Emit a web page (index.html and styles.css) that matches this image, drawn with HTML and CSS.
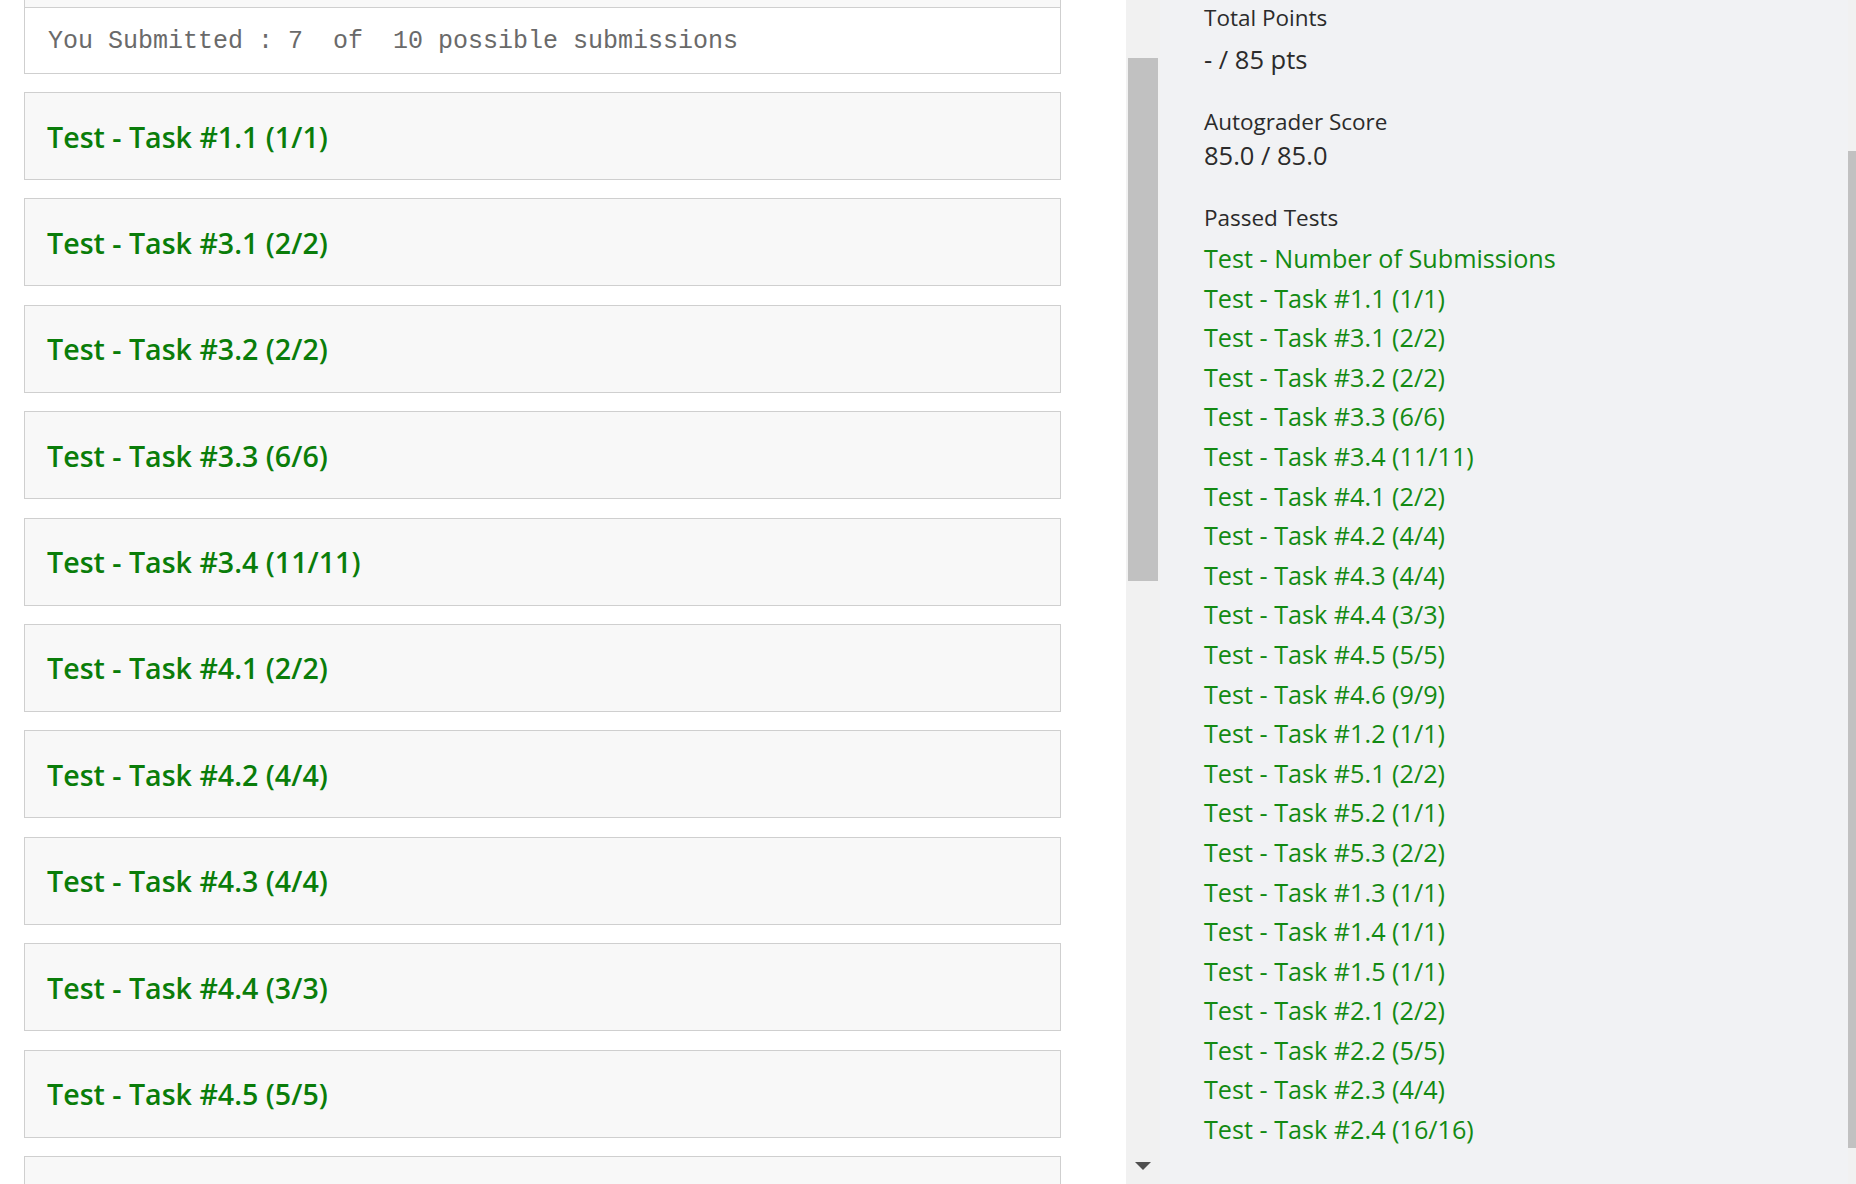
FILE: index.html
```html
<!DOCTYPE html>
<html lang="en">
<head>
    <meta charset="UTF-8">
    <title>Autograder Results</title>
    <link rel="stylesheet" href="styles.css">
</head>
<body>

    <!-- Test output column -->
    <div class="results">
        <div class="card card-clipped"></div>

        <div class="submit-box">You Submitted : 7  of  10 possible submissions</div>

        <div class="card"><h3>Test - Task #1.1 (1/1)</h3></div>
        <div class="card"><h3>Test - Task #3.1 (2/2)</h3></div>
        <div class="card"><h3>Test - Task #3.2 (2/2)</h3></div>
        <div class="card"><h3>Test - Task #3.3 (6/6)</h3></div>
        <div class="card"><h3>Test - Task #3.4 (11/11)</h3></div>
        <div class="card"><h3>Test - Task #4.1 (2/2)</h3></div>
        <div class="card"><h3>Test - Task #4.2 (4/4)</h3></div>
        <div class="card"><h3>Test - Task #4.3 (4/4)</h3></div>
        <div class="card"><h3>Test - Task #4.4 (3/3)</h3></div>
        <div class="card"><h3>Test - Task #4.5 (5/5)</h3></div>
        <div class="card card-empty"></div>
    </div>

    <!-- Scrollbar of the results column -->
    <div class="scroll-track">
        <div class="scroll-thumb"></div>
        <div class="scroll-arrow"></div>
    </div>

    <!-- Score sidebar -->
    <div class="sidebar">
        <div class="label label-first">Total Points</div>
        <div class="value value-points">- / 85 pts</div>

        <div class="label label-gap">Autograder Score</div>
        <div class="value">85.0 / 85.0</div>

        <div class="label label-gap">Passed Tests</div>
        <ul class="passed">
            <li>Test - Number of Submissions</li>
            <li>Test - Task #1.1 (1/1)</li>
            <li>Test - Task #3.1 (2/2)</li>
            <li>Test - Task #3.2 (2/2)</li>
            <li>Test - Task #3.3 (6/6)</li>
            <li>Test - Task #3.4 (11/11)</li>
            <li>Test - Task #4.1 (2/2)</li>
            <li>Test - Task #4.2 (4/4)</li>
            <li>Test - Task #4.3 (4/4)</li>
            <li>Test - Task #4.4 (3/3)</li>
            <li>Test - Task #4.5 (5/5)</li>
            <li>Test - Task #4.6 (9/9)</li>
            <li>Test - Task #1.2 (1/1)</li>
            <li>Test - Task #5.1 (2/2)</li>
            <li>Test - Task #5.2 (1/1)</li>
            <li>Test - Task #5.3 (2/2)</li>
            <li>Test - Task #1.3 (1/1)</li>
            <li>Test - Task #1.4 (1/1)</li>
            <li>Test - Task #1.5 (1/1)</li>
            <li>Test - Task #2.1 (2/2)</li>
            <li>Test - Task #2.2 (5/5)</li>
            <li>Test - Task #2.3 (4/4)</li>
            <li>Test - Task #2.4 (16/16)</li>
        </ul>
    </div>

    <!-- Page scrollbar -->
    <div class="page-track">
        <div class="page-thumb"></div>
    </div>

</body>
</html>
```

FILE: styles.css
```css
body {
    margin: 0;
    padding: 0;
    display: flex;
    height: 100vh;
    overflow: hidden;
    background-color: #fff;
    font-family: 'Open Sans', 'Noto Sans', sans-serif;
}

/* Results column */
.results {
    width: 1126px;
    flex-shrink: 0;
    padding-left: 24px;
    box-sizing: border-box;
    overflow: hidden;
}

.card {
    width: 1037px;
    height: 88px;
    box-sizing: border-box;
    background-color: #f8f8f8;
    border: 1px solid #cfcfcf;
    padding-left: 22px;
    display: flex;
    align-items: center;
    margin-bottom: 18.4px;
}

.card-clipped {
    height: 8px;
    border-top: none;
    margin-bottom: 0;
}

.card h3 {
    margin: 0;
    font-size: 28.6px;
    font-weight: 600;
    color: #0a7d0a;
}

.submit-box {
    width: 1037px;
    height: 66px;
    box-sizing: border-box;
    border: 1px solid #cfcfcf;
    border-top: none;
    padding: 2px 0 0 23px;
    display: flex;
    align-items: center;
    font-family: 'Liberation Mono', monospace;
    font-size: 25px;
    color: #6a6a6a;
    white-space: pre;
    margin-bottom: 18px;
}

/* Left scrollbar */
.scroll-track {
    width: 34px;
    flex-shrink: 0;
    background-color: #f1f1f1;
    display: flex;
    flex-direction: column;
    align-items: center;
}

.scroll-thumb {
    width: 30px;
    height: 523px;
    margin-top: 58px;
    background-color: #c1c1c1;
}

.scroll-arrow {
    margin-top: auto;
    margin-bottom: 14px;
    width: 0;
    height: 0;
    border-left: 8px solid transparent;
    border-right: 8px solid transparent;
    border-top: 8px solid #505050;
}

/* Score sidebar */
.sidebar {
    flex-grow: 1;
    background-color: #f1f2f4;
    padding-left: 44px;
    color: #2b2b2b;
}

.label {
    font-size: 22.5px;
    line-height: 30px;
    font-weight: 500;
}

.label-first {
    margin-top: 3px;
}

.label-gap {
    margin-top: 31px;
}

.value {
    font-size: 25.5px;
    line-height: 34px;
    font-weight: 500;
    margin-top: 1px;
}

.value-points {
    margin-top: 9px;
}

.passed {
    list-style: none;
    margin: 6px 0 0 0;
    padding: 0;
}

.passed li {
    font-size: 25.2px;
    line-height: 39.6px;
    color: #138a13;
}

/* Page scrollbar */
.page-track {
    width: 8px;
    flex-shrink: 0;
    background-color: #f1f1f1;
    display: flex;
    flex-direction: column;
}

.page-thumb {
    margin-top: 151px;
    height: 997px;
    background-color: #c1c1c1;
}
```
